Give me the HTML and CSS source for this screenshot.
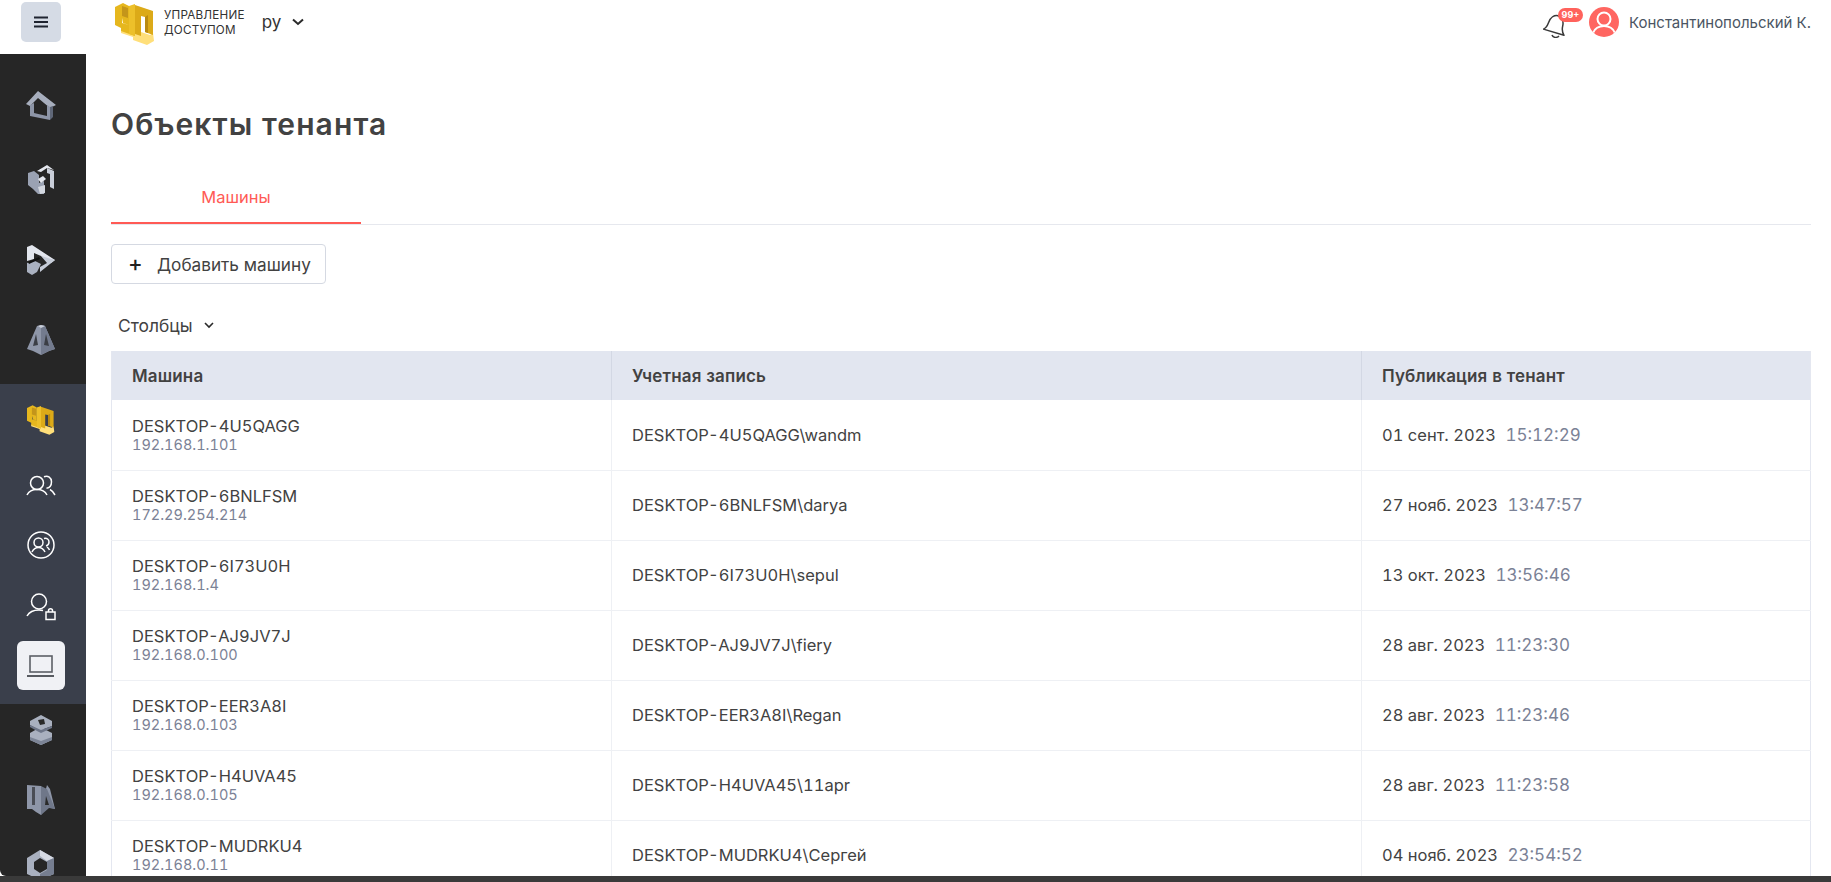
FILE: index.html
```html
<!DOCTYPE html>
<html lang="ru">
<head>
    <meta charset="UTF-8">
    <meta name="viewport" content="width=device-width, initial-scale=1.0">
    <title>Объекты тенанта</title>
    <link rel="stylesheet" href="styles.css">
</head>
<body>
    <svg class="defs" width="0" height="0">
        <symbol id="logo-3d" viewBox="0 0 40 42">
            <polygon points="6,27 20,32 20,27 35,32 38,30 39,38 32,42 18,37 18,34 6,30" fill="#ffdf7a"/>
            <polygon points="0,4 8,0 14,3 14,22 8,20 8,15 7,20 14,22 20,24 20,33 6,28 6,25 0,22" fill="#e6b71e"/>
            <polygon points="7,3 13,5 13,15 7,13" fill="#c4951a"/>
            <polygon points="14,3 20,1 20,33 14,31" fill="#edc02a"/>
            <polygon points="20,2 38,8 38,32 30,29 30,14 26,13 26,33 20,31" fill="#dcaa18"/>
            <polygon points="30,14 33,12 33,30 30,29" fill="#b98a12"/>
        </symbol>
    </svg>

    <header class="topbar">
        <button class="menu-btn" type="button">
            <svg width="14" height="12" viewBox="0 0 14 12"><path d="M0 1.500h14M0 6h14M0 10.500h14" stroke="#1f2430" stroke-width="1.800"/></svg>
        </button>
        <svg class="logo" width="40" height="42"><use href="#logo-3d"/></svg>
        <div class="logo-text">УПРАВЛЕНИЕ<br>ДОСТУПОМ</div>
        <div class="lang">ру</div>
        <svg class="lang-arrow" width="12" height="8" viewBox="0 0 12 8"><path d="M1 1.500l5 4.500 5-4.500" fill="none" stroke="#2a2a2a" stroke-width="2"/></svg>
        <div class="topbar-right">
            <div class="bell">
                <svg width="26" height="28" viewBox="0 0 26 28"><g fill="none" stroke="#3a3a3a" stroke-width="1.500" stroke-linejoin="round"><path d="M2 22c3-2 3-4 3.500-8 .6-5 3.500-8.500 7.500-8.500s7 4 7 9c0 4 1 6 3.500 8.500z" transform="rotate(14 13 14)"/><path d="M9 25c1 3 5 3 7 1"/></g></svg>
                <span class="badge">99+</span>
            </div>
            <div class="avatar">
                <svg width="30" height="30" viewBox="0 0 30 30"><g fill="none" stroke="#fff" stroke-width="2"><circle cx="15" cy="12" r="6.500"/><path d="M4 26c2-5 6-7 11-7s9 2 11 7"/></g></svg>
            </div>
            <span class="user-name">Константинопольский К.</span>
        </div>
    </header>

    <div class="layout">
        <aside class="sidebar">
            <div class="nav-group nav-group-top">
                <div class="nav-item nav-home">
                    <svg width="30" height="30" viewBox="0 0 30 30">
                        <polygon points="12,0 0,13 4,15 12,7 24,17 30,14" fill="#a7aebd"/>
                        <polygon points="4,14 8,12 8,22 21,25 21,14 24,16 24,29 4,25" fill="#8d95a7"/>
                        <polygon points="24,16 27,15 27,26 24,29" fill="#5f6778"/>
                    </svg>
                </div>
                <div class="nav-item nav-cube">
                    <svg width="28" height="30" viewBox="0 0 28 30">
                        <polygon points="10,6 20,0 27,5 20,3 14,7" fill="#e4e7ee"/>
                        <polygon points="20,3 27,6 27,24 23,22 23,9 20,8" fill="#c9ced9"/>
                        <polygon points="1,8 7,6 12,10 12,18 17,16 17,29 11,29 6,24 1,20" fill="#9aa2b3"/>
                        <polygon points="11,14 16,11 19,14 14,18" fill="#e4e7ee"/>
                        <polygon points="11,22 18,20 18,28 13,29" fill="#d3d7e0"/>
                    </svg>
                </div>
                <div class="nav-item nav-play">
                    <svg width="28" height="30" viewBox="0 0 28 30">
                        <polygon points="0,2 5,0 28,15 24,18 14,11 7,8 7,14 0,16" fill="#e3e6ee"/>
                        <polygon points="14,11 28,15 13,27 13,22 20,18" fill="#c6ccd8"/>
                        <polygon points="0,18 8,16 14,19 10,27 5,30 0,27" fill="#aab1c0"/>
                        <polygon points="1,17 12,12 13,14 2,19" fill="#111"/>
                    </svg>
                </div>
                <div class="nav-item nav-peak">
                    <svg width="28" height="30" viewBox="0 0 28 30">
                        <polygon points="10,1 14,0 18,1 28,24 22,26 14,30 6,26 0,24" fill="#8e96a8"/>
                        <polygon points="14,0 18,1 28,24 22,26 14,30" fill="#737b8e"/>
                        <polygon points="9,9 11,20 6,21" fill="#3b3e45"/>
                        <polygon points="19,9 22,21 17,20" fill="#3b3e45"/>
                        <polygon points="11,1 14,0 18,1 14,3" fill="#c9ced9"/>
                    </svg>
                </div>
            </div>
            <div class="nav-group nav-group-active">
                <div class="nav-item nav-logo">
                    <svg width="28" height="30"><use href="#logo-3d"/></svg>
                </div>
                <div class="nav-item nav-users">
                    <svg width="30" height="22" viewBox="0 0 30 22"><g fill="none" stroke="#fff" stroke-width="1.500"><circle cx="11" cy="8" r="6.500"/><path d="M1 20c2-4 5-5.500 10-5.500s8 1.500 10 5.500"/><path d="M18 1.800c4-1.500 7.500 1 7.500 5 0 3.500-2 6-5 6.500M24 14.500c2 1 3.500 3 5 5.500"/></g></svg>
                </div>
                <div class="nav-item nav-group-circle">
                    <svg width="28" height="28" viewBox="0 0 28 28"><g fill="none" stroke="#fff" stroke-width="1.500"><circle cx="14" cy="14" r="13"/><circle cx="11.500" cy="11.500" r="4.500"/><path d="M5 21c1.500-3 3.500-4.500 6.500-4.500s5 1.500 6.500 4.500"/><path d="M17 7.500c3-.8 5 1 5 3.500 0 2-1 3.500-3 4M20 16c1 .7 2 1.800 2.500 3"/></g></svg>
                </div>
                <div class="nav-item nav-user-lock">
                    <svg width="30" height="28" viewBox="0 0 30 28"><g fill="none" stroke="#fff" stroke-width="1.500"><circle cx="13" cy="8.500" r="7.500"/><path d="M1 23c2.500-4.500 6-6 12-6 1.500 0 3 .2 4 .5"/><rect x="20" y="19" width="9" height="7.500"/><path d="M22.500 19v-1.500c0-2.500 4-2.500 4 0V19"/></g></svg>
                </div>
                <div class="nav-item nav-laptop">
                    <div class="active-box">
                        <svg width="28" height="22" viewBox="0 0 28 22"><rect x="3" y="1" width="22" height="16" fill="none" stroke="#5c5f66" stroke-width="1.600"/><path d="M0 21h27" stroke="#33363c" stroke-width="1.600"/></svg>
                    </div>
                </div>
            </div>
            <div class="nav-group nav-group-bottom">
                <div class="nav-item nav-server">
                    <svg width="24" height="30" viewBox="0 0 24 30">
                        <polygon points="12,0 23,6 23,11 15,14 23,18 23,25 12,30 1,25 1,18 8,14 1,10 1,6" fill="#a9b0bf"/>
                        <polygon points="1,10 12,15 23,11 23,13 12,18 8,16 1,12" fill="#6d7588"/>
                        <polygon points="1,22 12,26 23,22 23,25 12,30 1,25" fill="#7c8496"/>
                        <polygon points="9,5 15,4 16,9 11,10" fill="#2a2a2a"/>
                    </svg>
                </div>
                <div class="nav-item nav-ca">
                    <svg width="28" height="30" viewBox="0 0 28 30">
                        <polygon points="0,0 14,1 14,22 20,0 23,4 28,24 20,22 14,30 9,27 5,24 0,24" fill="#8e96a8"/>
                        <polygon points="14,1 20,4 28,24 22,23 14,30" fill="#6f7789"/>
                        <polygon points="5,2 8,2 8,20 5,20" fill="#4a4d55"/>
                        <polygon points="19,11 22,20 18,20" fill="#2a2a2a"/>
                    </svg>
                </div>
                <div class="nav-item nav-hex">
                    <svg width="28" height="30" viewBox="0 0 28 30">
                        <polygon points="13,0 27,8 27,24 13,30 0,24 0,8" fill="#a9b0bf"/>
                        <polygon points="13,0 27,8 20,11 13,6" fill="#d6dae3"/>
                        <polygon points="20,11 27,8 27,24 13,30 13,24 20,20" fill="#767e90"/>
                        <polygon points="13,8 20,12 20,19 13,23 7,19 7,12" fill="#262626"/>
                    </svg>
                </div>
            </div>
        </aside>

        <main class="content">
            <h1 class="page-title">Объекты тенанта</h1>

            <div class="tabs">
                <div class="tab tab-active">Машины</div>
            </div>

            <button class="add-btn" type="button"><span class="plus">+</span>Добавить машину</button>

            <div class="columns-toggle">
                Столбцы
                <svg width="10" height="7" viewBox="0 0 10 7"><path d="M1 1l4 4 4-4" fill="none" stroke="#2a2a2a" stroke-width="1.600"/></svg>
            </div>

            <table class="machines">
                <colgroup>
                    <col class="col-machine">
                    <col class="col-account">
                    <col class="col-date">
                </colgroup>
                <thead>
                    <tr>
                        <th>Машина</th>
                        <th>Учетная запись</th>
                        <th>Публикация в тенант</th>
                    </tr>
                </thead>
                <tbody>
                    <tr>
                        <td>DESKTOP-4U5QAGG<div class="ip">192.168.1.101</div></td>
                        <td>DESKTOP-4U5QAGG\wandm</td>
                        <td>01 сент. 2023 <span class="time">15:12:29</span></td>
                    </tr>
                    <tr>
                        <td>DESKTOP-6BNLFSM<div class="ip">172.29.254.214</div></td>
                        <td>DESKTOP-6BNLFSM\darya</td>
                        <td>27 нояб. 2023 <span class="time">13:47:57</span></td>
                    </tr>
                    <tr>
                        <td>DESKTOP-6I73U0H<div class="ip">192.168.1.4</div></td>
                        <td>DESKTOP-6I73U0H\sepul</td>
                        <td>13 окт. 2023 <span class="time">13:56:46</span></td>
                    </tr>
                    <tr>
                        <td>DESKTOP-AJ9JV7J<div class="ip">192.168.0.100</div></td>
                        <td>DESKTOP-AJ9JV7J\fiery</td>
                        <td>28 авг. 2023 <span class="time">11:23:30</span></td>
                    </tr>
                    <tr>
                        <td>DESKTOP-EER3A8I<div class="ip">192.168.0.103</div></td>
                        <td>DESKTOP-EER3A8I\Regan</td>
                        <td>28 авг. 2023 <span class="time">11:23:46</span></td>
                    </tr>
                    <tr>
                        <td>DESKTOP-H4UVA45<div class="ip">192.168.0.105</div></td>
                        <td>DESKTOP-H4UVA45\11apr</td>
                        <td>28 авг. 2023 <span class="time">11:23:58</span></td>
                    </tr>
                    <tr>
                        <td>DESKTOP-MUDRKU4<div class="ip">192.168.0.11</div></td>
                        <td>DESKTOP-MUDRKU4\Сергей</td>
                        <td>04 нояб. 2023 <span class="time">23:54:52</span></td>
                    </tr>
                </tbody>
            </table>
        </main>
    </div>
    <div class="bottom-strip"></div>
</body>
</html>
```

FILE: styles.css
```css
/* Global Styles */
html, body {
    height: 100%;
}

body {
    font-family: 'Inter', 'Roboto', sans-serif;
    margin: 0;
    padding: 0;
    background-color: #fff;
    color: #424242;
    overflow: hidden;
    display: flex;
    flex-direction: column;
}

.defs {
    position: absolute;
}

/* Top Bar */
.topbar {
    height: 54px;
    flex-shrink: 0;
    display: flex;
    align-items: flex-start;
    background: #fff;
}

.menu-btn {
    width: 40px;
    height: 40px;
    margin: 2px 0 0 21px;
    padding: 0;
    border: none;
    border-radius: 5px;
    background: #d5dbe5;
    display: flex;
    align-items: center;
    justify-content: center;
}

.logo {
    margin: 3px 0 0 54px;
}

.logo-text {
    margin: 8px 0 0 9px;
    font-size: 11.7px;
    line-height: 15px;
    letter-spacing: 0.2px;
    color: #333;
}

.lang {
    margin: 12px 0 0 17px;
    font-size: 17px;
    color: #333;
}

.lang-arrow {
    margin: 18px 0 0 11px;
}

.topbar-right {
    margin-left: auto;
    padding: 7px 20px 0 0;
    display: flex;
    align-items: flex-start;
}

.bell {
    position: relative;
    width: 26px;
    height: 30px;
    margin-top: 3px;
}

.badge {
    position: absolute;
    top: -2px;
    left: 15px;
    width: 25px;
    height: 14px;
    border-radius: 7px;
    background: #ff625c;
    color: #fff;
    font-size: 9px;
    font-weight: 700;
    line-height: 14px;
    text-align: center;
}

.avatar {
    width: 30px;
    height: 30px;
    margin-left: 20px;
    border-radius: 50%;
    background: #ff6661;
    overflow: hidden;
}

.user-name {
    margin: 6px 0 0 10px;
    font-size: 15px;
    color: #4b5563;
}

/* Layout */
.layout {
    flex: 1;
    min-height: 0;
    display: flex;
}

.sidebar {
    width: 86px;
    flex-shrink: 0;
    background: #262626;
    overflow: hidden;
    border-bottom-left-radius: 6px;
}

.nav-group-top {
    padding: 16px 0 6px;
}

.nav-group-active {
    background: #3a3f4b;
    padding-bottom: 13px;
}

.nav-item {
    display: flex;
    align-items: center;
    justify-content: center;
    padding-right: 4px;
}

.nav-home { height: 72px; }
.nav-cube { height: 76px; }
.nav-play { height: 84px; }
.nav-peak { height: 76px; }
.nav-logo { height: 72px; }
.nav-users { height: 60px; }
.nav-group-circle { height: 58px; }
.nav-user-lock { height: 66px; }
.nav-laptop { height: 51px; }
.nav-server { height: 52px; }
.nav-ca { height: 88px; }
.nav-hex { height: 42px; }

.active-box {
    width: 48px;
    height: 49px;
    border-radius: 6px;
    background: #f0f1f5;
    display: flex;
    align-items: center;
    justify-content: center;
}

/* Content */
.content {
    flex: 1;
    min-width: 0;
    padding: 0 20px 0 25px;
    overflow: hidden;
}

.page-title {
    margin: 53px 0 0;
    font-size: 30px;
    line-height: 34px;
    font-weight: 600;
    letter-spacing: 1.1px;
    color: #424242;
}

.tabs {
    margin-top: 28px;
    height: 55px;
    border-bottom: 1px solid #e6e8ee;
    display: flex;
}

.tab {
    width: 250px;
    height: 55px;
    box-sizing: border-box;
    padding-top: 18px;
    text-align: center;
    font-size: 16.5px;
    color: #ff5a55;
}

.tab-active {
    border-bottom: 2px solid #ff5a55;
}

.add-btn {
    display: flex;
    align-items: center;
    margin-top: 19px;
    width: 215px;
    height: 40px;
    padding: 0 0 0 16px;
    background: #fff;
    border: 1px solid #d5d9e2;
    border-radius: 4px;
    font-family: inherit;
    font-size: 17.2px;
    color: #424242;
}

.plus {
    width: 29px;
    padding-bottom: 3px;
    font-size: 22px;
    font-weight: 500;
    line-height: 20px;
    color: #222;
    text-align: left;
}

.columns-toggle {
    display: flex;
    align-items: center;
    gap: 12px;
    margin: 29px 0 0 7px;
    height: 24px;
    font-size: 17.4px;
    color: #424242;
}

/* Table */
.machines {
    margin-top: 14px;
    width: 1699px;
    table-layout: fixed;
    border-collapse: collapse;
    font-size: 16.5px;
    font-variant-numeric: tabular-nums;
    border-left: 1px solid #e4e7f0;
    border-right: 1px solid #e4e7f0;
}

.col-machine { width: 500px; }
.col-account { width: 750px; }
.col-date { width: 449px; }

.machines th {
    height: 49px;
    padding: 0 20px;
    background: #e2e6f0;
    border-right: 1px solid #d3d8e4;
    font-weight: 600;
    font-size: 17px;
    letter-spacing: 0.15px;
    text-align: left;
}

.machines th:last-child {
    border-right: none;
}

.machines td {
    height: 70px;
    box-sizing: border-box;
    padding: 0 20px;
    border-right: 1px solid #eef0f4;
    border-bottom: 1px solid #eef0f4;
    line-height: 20px;
}

.machines td:last-child {
    border-right: none;
}

.ip {
    font-size: 14.5px;
    line-height: 18px;
    color: #7b8296;
}

.time {
    margin-left: 5px;
    font-size: 17px;
    color: #7b8296;
}

.bottom-strip {
    height: 6px;
    flex-shrink: 0;
    background: #3a3a3a;
}
```
